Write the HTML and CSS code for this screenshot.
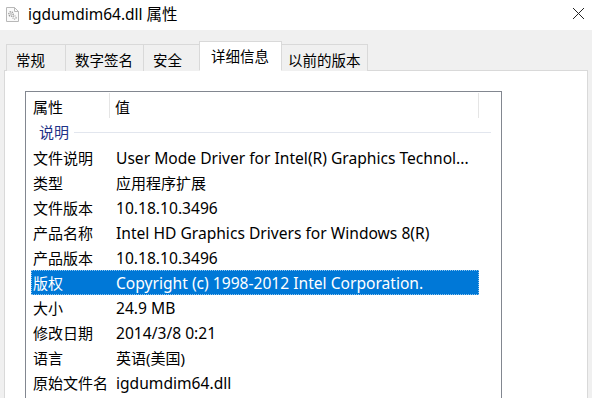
FILE: index.html
```html
<!DOCTYPE html>
<html lang="zh-CN">
<head>
<meta charset="utf-8">
<title>igdumdim64.dll 属性</title>
<link rel="stylesheet" href="styles.css">
</head>
<body>
<div class="window">
  <div class="titlebar">
    <svg class="ficon" width="13" height="15" viewBox="0 0 13 15">
      <path d="M0.5 0.5 H8.5 L12.5 4.5 V14.5 H0.5 Z" fill="#fafafa" stroke="#b8b8b8"/>
      <path d="M8.5 0.5 V4.5 H12.5" fill="none" stroke="#b8b8b8"/>
      <circle cx="5" cy="7" r="2.2" fill="none" stroke="#9a9a9a" stroke-width="1.4" stroke-dasharray="1.2 0.8"/>
      <circle cx="5" cy="7" r="0.8" fill="#9a9a9a"/>
      <circle cx="8.5" cy="10.5" r="1.6" fill="none" stroke="#a8a8a8" stroke-width="1.2" stroke-dasharray="1 0.7"/>
    </svg>
    <span class="title">igdumdim64.dll 属性</span>
    <span class="spacer"></span>
    <svg class="close" width="13" height="13" viewBox="0 0 13 13">
      <path d="M1 1 L12 12 M12 1 L1 12" stroke="#222" stroke-width="1"/>
    </svg>
  </div>
  <div class="client">
    <div class="tabs">
      <div class="tab t1">常规</div>
      <div class="tab t2">数字签名</div>
      <div class="tab t3">安全</div>
      <div class="tab active">详细信息</div>
      <div class="tab t5">以前的版本</div>
    </div>
    <div class="panel">
      <div class="list">
        <div class="header">
          <div class="hcol name">属性</div>
          <div class="hcol value">值</div>
          <div class="hrest"></div>
        </div>
        <div class="group"><span class="glabel">说明</span><span class="gline"></span></div>
        <div class="row"><span class="k">文件说明</span><span class="v">User Mode Driver for Intel(R) Graphics Technol...</span></div>
        <div class="row"><span class="k">类型</span><span class="v cjk">应用程序扩展</span></div>
        <div class="row"><span class="k">文件版本</span><span class="v">10.18.10.3496</span></div>
        <div class="row"><span class="k">产品名称</span><span class="v">Intel HD Graphics Drivers for Windows 8(R)</span></div>
        <div class="row"><span class="k">产品版本</span><span class="v">10.18.10.3496</span></div>
        <div class="row selected"><span class="k">版权</span><span class="v">Copyright (c) 1998-2012 Intel Corporation.</span></div>
        <div class="row"><span class="k">大小</span><span class="v">24.9 MB</span></div>
        <div class="row"><span class="k">修改日期</span><span class="v">2014/3/8 0:21</span></div>
        <div class="row"><span class="k">语言</span><span class="v cjk">英语(美国)</span></div>
        <div class="row"><span class="k">原始文件名</span><span class="v">igdumdim64.dll</span></div>
        <div class="row"><span class="k"></span><span class="v"></span></div>
      </div>
    </div>
  </div>
</div>
</body>
</html>
```

FILE: styles.css
```css
* { box-sizing: border-box; }
html, body {
  margin: 0;
  padding: 0;
  width: 592px;
  height: 398px;
  overflow: hidden;
  background: #f0f0f0;
}
body {
  font-family: "Noto Sans", "Noto Sans CJK SC", sans-serif;
  font-size: 14.5px;
  color: #000;
}
.window {
  width: 592px;
  height: 398px;
  display: flex;
  flex-direction: column;
}
.titlebar {
  height: 30px;
  background: #fff;
  display: flex;
  align-items: center;
  padding-left: 6px;
  padding-right: 7px;
  flex: none;
}
.ficon { flex: none; margin-top: -2px; }
.title {
  margin-left: 9px;
  font-size: 15.5px;
  font-family: "Noto Sans", "Noto Sans CJK SC", sans-serif;
  margin-top: -3px;
}
.spacer { flex: 1; }
.close { flex: none; margin-top: -4px; }
.client {
  flex: 1;
  background: #f0f0f0;
  padding: 11px 4px 0 4px;
  display: flex;
  flex-direction: column;
  min-height: 0;
}
.tabs {
  display: flex;
  align-items: flex-end;
  padding-left: 2px;
  height: 30px;
  position: relative;
  z-index: 1;
  margin-bottom: -1px;
}
.tab {
  height: 27px;
  border: 1px solid #d9d9d9;
  border-bottom: none;
  border-right: none;
  background: #f0f0f0;
  display: flex;
  align-items: center;
  justify-content: flex-start;
  padding-left: 9px;
  font-family: "Noto Sans CJK SC", sans-serif;
  font-size: 14.5px;
  padding-top: 2px;
}
.t1 { width: 59px; }
.t2 { width: 78px; }
.t3 { width: 58px; }
.t5 { width: 88px; border-right: 1px solid #d9d9d9; border-left: none; padding-left: 8px; }
.tab.active {
  width: 83px;
  height: 30px;
  background: #fff;
  border: 1px solid #d9d9d9;
  border-bottom: 1px solid #fff;
  margin-left: -2px;
  margin-right: -2px;
  padding-left: 11px;
  position: relative;
  z-index: 2;
  padding-top: 0;
  padding-bottom: 2px;
}
.panel {
  flex: 1;
  background: #fff;
  border: 1px solid #d9d9d9;
  border-bottom: none;
  width: 584px;
  padding: 20px 0 0 20px;
  min-height: 0;
  overflow: hidden;
}
.list {
  width: 477px;
  height: 400px;
  border: 1px solid #828790;
  border-bottom: none;
  background: #fff;
}
.header {
  height: 27px;
  display: flex;
  align-items: stretch;
}
.hcol {
  display: flex;
  align-items: center;
  font-family: "Noto Sans CJK SC", sans-serif;
  font-size: 15px;
  padding-top: 2px;
}
.hcol.name {
  width: 84px;
  padding-left: 7px;
  border-right: 1px solid #e5e5e5;
  margin: 1px 0;
}
.hcol.value {
  width: 369px;
  padding-left: 5px;
  border-right: 1px solid #e5e5e5;
  margin: 1px 0;
}
.hrest { flex: 1; }
.group {
  height: 26px;
  display: flex;
  align-items: center;
  padding-left: 13px;
  padding-right: 10px;
  padding-bottom: 1px;
}
.glabel {
  color: #1e3287;
  font-family: "Noto Sans CJK SC", sans-serif;
  font-size: 15px;
}
.gline {
  flex: 1;
  height: 1px;
  background: #e2e6ee;
  margin-left: 5px;
  margin-top: 2px;
}
.row {
  height: 25px;
  width: 448px;
  margin-left: 5px;
  display: grid;
  grid-template-columns: 83px 1fr;
  align-items: center;
  padding-left: 1px;
  white-space: nowrap;
  overflow: hidden;
  border: 1px solid transparent;
}
.row span { overflow: hidden; }
.k { font-family: "Noto Sans CJK SC", sans-serif; font-size: 15px; }
.v { font-size: 15.6px; }
.v.cjk { font-size: 15px; }
.row.selected {
  background: #0078d7;
  color: #fff;
  border: 1px dotted #8cc4ee;
}
```
